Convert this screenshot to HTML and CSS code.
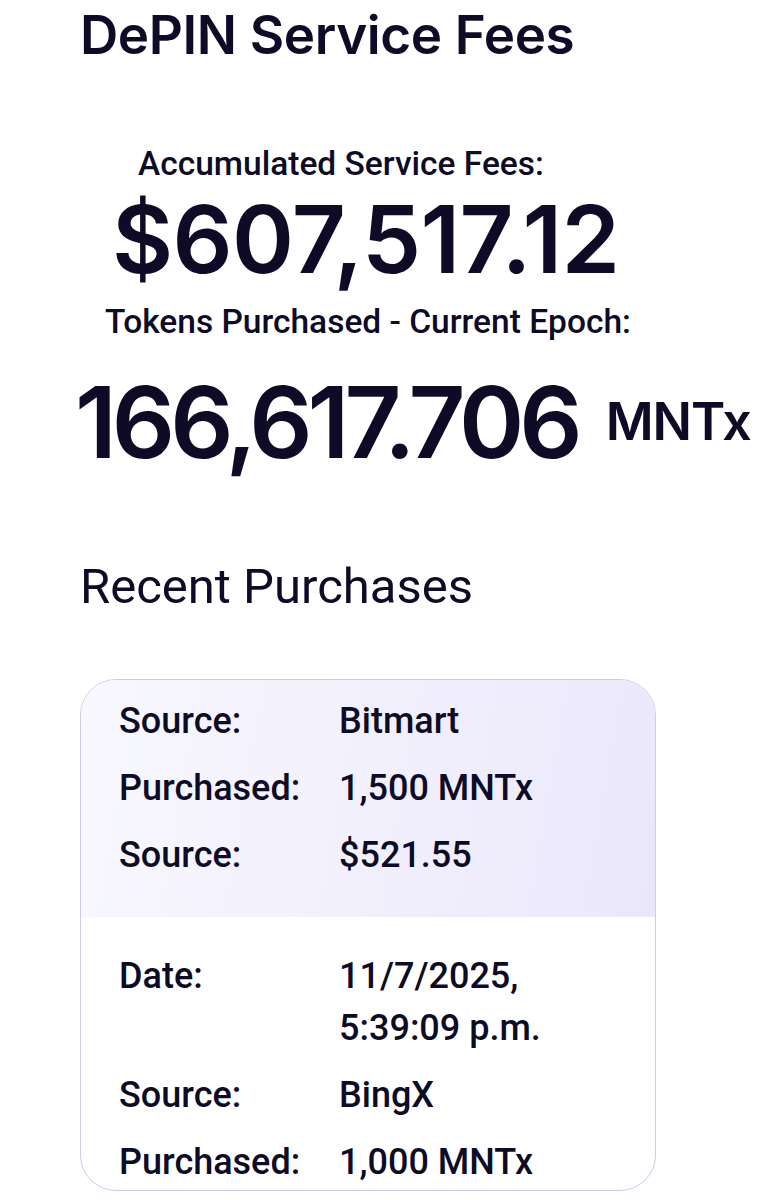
FILE: index.html
```html
<!DOCTYPE html>
<html lang="en">
<head>
    <meta charset="UTF-8">
    <title>DePIN Service Fees</title>
    <link rel="stylesheet" href="styles.css">
</head>
<body>
    <div id="page">
        <h1 class="title">DePIN Service Fees</h1>

        <div class="stat stat-fees">
            <div class="stat-label">Accumulated Service Fees:</div>
            <div class="stat-value">$607,517.12</div>
        </div>

        <div class="stat stat-tokens">
            <div class="stat-label">Tokens Purchased - Current Epoch:</div>
            <div class="stat-value"><span class="amount">166,617.706</span><span class="unit">MNTx</span></div>
        </div>

        <h2 class="section-title">Recent Purchases</h2>

        <div class="card">
            <div class="purchase purchase-first">
                <div class="row"><span class="key">Source:</span><span class="val">Bitmart</span></div>
                <div class="row"><span class="key">Purchased:</span><span class="val">1,500 MNTx</span></div>
                <div class="row"><span class="key">Source:</span><span class="val">$521.55</span></div>
            </div>
            <div class="purchase">
                <div class="row"><span class="key">Date:</span><span class="val">11/7/2025, 5:39:09 p.m.</span></div>
                <div class="row"><span class="key">Source:</span><span class="val">BingX</span></div>
                <div class="row"><span class="key">Purchased:</span><span class="val">1,000 MNTx</span></div>
            </div>
        </div>
    </div>
</body>
</html>
```

FILE: styles.css
```css
* {
    margin: 0;
    padding: 0;
    box-sizing: border-box;
}
body {
    background: #fff;
    color: #0d0b26;
    font-family: Roboto, "Noto Sans", sans-serif;
    overflow: hidden;
}
#page {
    padding: 0 0 0 80px;
    height: 1200px;
}
.title {
    font-family: Inter, sans-serif;
    font-weight: 600;
    font-size: 53px;
    letter-spacing: -0.4px;
    line-height: 66px;
    margin-top: 2px;
}
.stat-label {
    font-weight: 500;
    font-size: 33.5px;
    line-height: 40px;
}
.stat-value {
    font-family: Inter, sans-serif;
    font-weight: 600;
    line-height: 1;
    white-space: nowrap;
}
.stat-fees {
    margin-top: 76px;
}
.stat-fees .stat-label {
    padding-left: 58px;
}
.stat-fees .stat-value {
    font-size: 94px;
    letter-spacing: -0.6px;
    padding-left: 32px;
    margin-top: 8px;
}
.stat-tokens {
    margin-top: 16px;
}
.stat-tokens .stat-label {
    padding-left: 25px;
}
.stat-tokens .stat-value {
    display: flex;
    align-items: baseline;
    gap: 28px;
    margin-top: 31px;
    margin-left: -5px;
}
.amount {
    font-size: 99px;
    letter-spacing: -5px;
}
.unit {
    font-size: 52px;
    letter-spacing: -1px;
    position: relative;
    top: -18px;
}
.section-title {
    font-weight: 400;
    font-size: 49px;
    line-height: 60px;
    margin-top: 85px;
}
.card {
    margin-top: 62px;
    width: 576px;
    border: 1.5px solid #cdcaea;
    border-radius: 36px;
    overflow: hidden;
}
.purchase {
    display: flex;
    flex-direction: column;
    gap: 15px;
    padding: 33px 38px 2px;
}
.purchase-first {
    padding: 15px 38px 36px;
    background: linear-gradient(100deg, #f8f8fe 0%, #f1effc 55%, #ebe7fb 100%);
}
.row {
    display: grid;
    grid-template-columns: 220px 1fr;
    font-weight: 500;
    font-size: 36px;
    line-height: 52px;
}
.val {
    padding-right: 20px;
}
```
